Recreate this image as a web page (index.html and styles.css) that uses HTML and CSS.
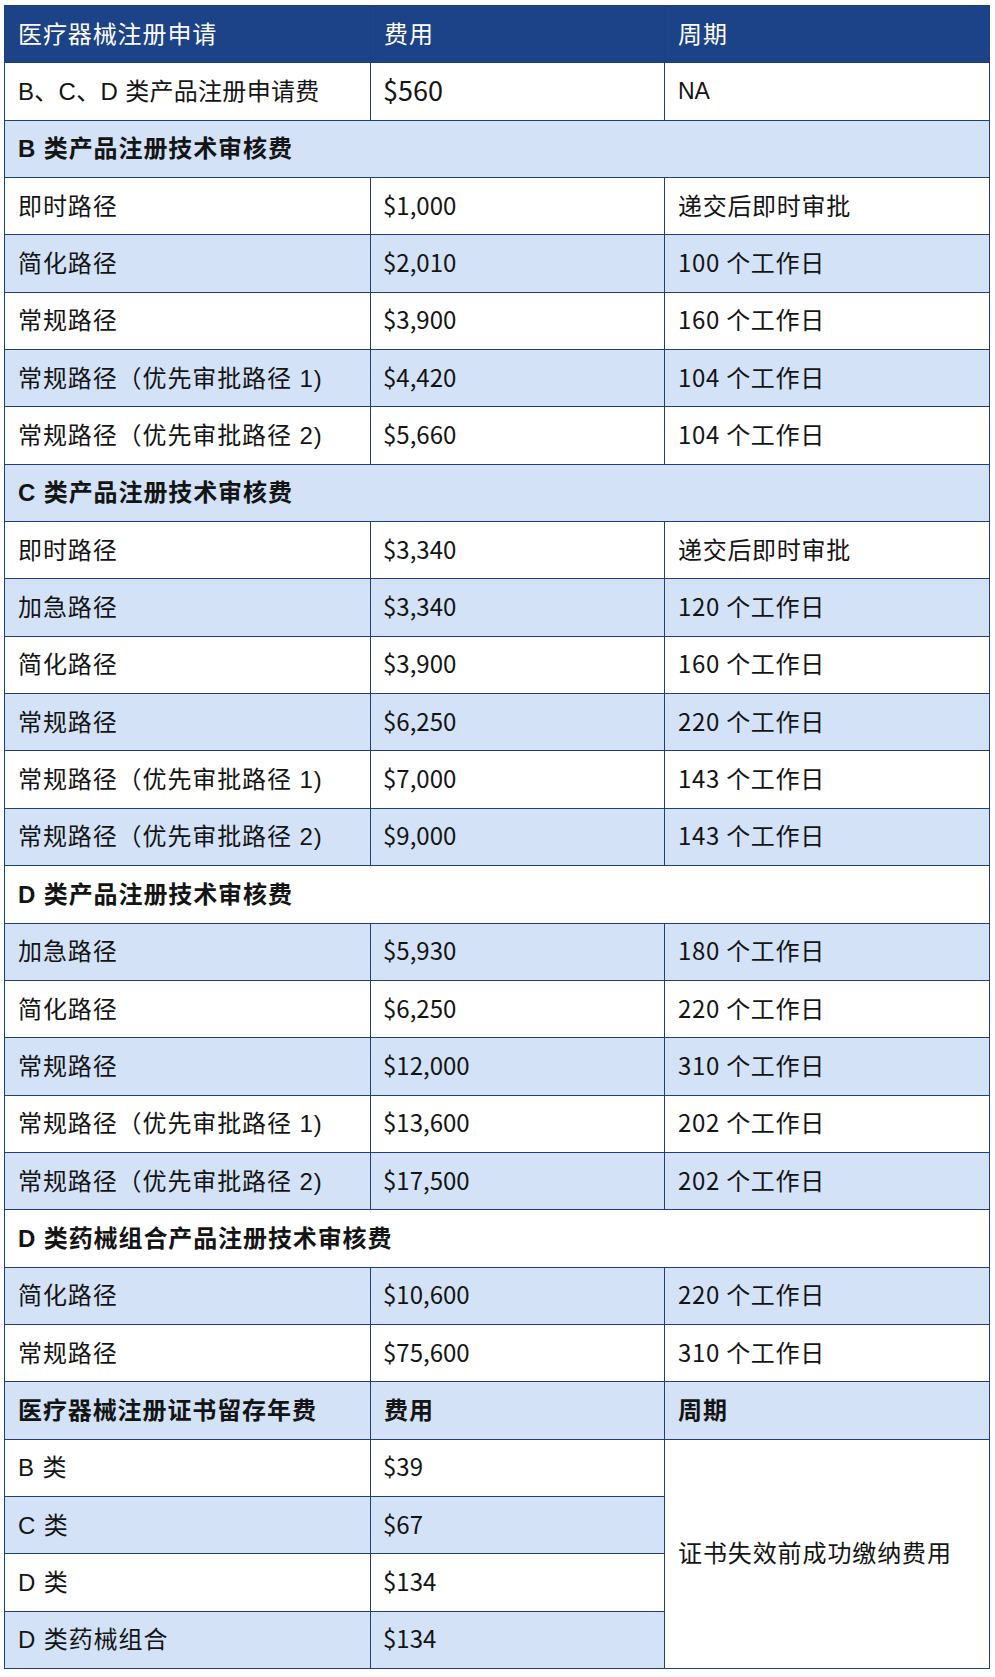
FILE: index.html
```html
<!DOCTYPE html>
<html lang="zh-CN">
<head>
<meta charset="utf-8">
<title>医疗器械注册费用</title>
<link rel="stylesheet" href="styles.css">
</head>
<body>
<div class="fee-table">
  <div class="cell head">医疗器械注册申请</div>
  <div class="cell head">费用</div>
  <div class="cell head">周期</div>

  <div class="cell c1 tight">B、C、D 类产品注册申请费</div>
  <div class="cell money big">$560</div>
  <div class="cell na">NA</div>

  <div class="cell section alt">B 类产品注册技术审核费</div>

  <div class="cell c1">即时路径</div><div class="cell money">$1,000</div><div class="cell c3">递交后即时审批</div>
  <div class="cell c1 alt">简化路径</div><div class="cell money alt">$2,010</div><div class="cell c3 alt">100 个工作日</div>
  <div class="cell c1">常规路径</div><div class="cell money">$3,900</div><div class="cell c3">160 个工作日</div>
  <div class="cell c1 alt">常规路径（优先审批路径 1)</div><div class="cell money alt">$4,420</div><div class="cell c3 alt">104 个工作日</div>
  <div class="cell c1">常规路径（优先审批路径 2)</div><div class="cell money">$5,660</div><div class="cell c3">104 个工作日</div>

  <div class="cell section alt">C 类产品注册技术审核费</div>

  <div class="cell c1">即时路径</div><div class="cell money">$3,340</div><div class="cell c3">递交后即时审批</div>
  <div class="cell c1 alt">加急路径</div><div class="cell money alt">$3,340</div><div class="cell c3 alt">120 个工作日</div>
  <div class="cell c1">简化路径</div><div class="cell money">$3,900</div><div class="cell c3">160 个工作日</div>
  <div class="cell c1 alt">常规路径</div><div class="cell money alt">$6,250</div><div class="cell c3 alt">220 个工作日</div>
  <div class="cell c1">常规路径（优先审批路径 1)</div><div class="cell money">$7,000</div><div class="cell c3">143 个工作日</div>
  <div class="cell c1 alt">常规路径（优先审批路径 2)</div><div class="cell money alt">$9,000</div><div class="cell c3 alt">143 个工作日</div>

  <div class="cell section">D 类产品注册技术审核费</div>

  <div class="cell c1 alt">加急路径</div><div class="cell money alt">$5,930</div><div class="cell c3 alt">180 个工作日</div>
  <div class="cell c1">简化路径</div><div class="cell money">$6,250</div><div class="cell c3">220 个工作日</div>
  <div class="cell c1 alt">常规路径</div><div class="cell money alt">$12,000</div><div class="cell c3 alt">310 个工作日</div>
  <div class="cell c1">常规路径（优先审批路径 1)</div><div class="cell money">$13,600</div><div class="cell c3">202 个工作日</div>
  <div class="cell c1 alt">常规路径（优先审批路径 2)</div><div class="cell money alt">$17,500</div><div class="cell c3 alt">202 个工作日</div>

  <div class="cell section">D 类药械组合产品注册技术审核费</div>

  <div class="cell c1 alt">简化路径</div><div class="cell money alt">$10,600</div><div class="cell c3 alt">220 个工作日</div>
  <div class="cell c1">常规路径</div><div class="cell money">$75,600</div><div class="cell c3">310 个工作日</div>

  <div class="cell subhead alt">医疗器械注册证书留存年费</div>
  <div class="cell subhead alt">费用</div>
  <div class="cell subhead alt">周期</div>

  <div class="cell c1">B 类</div><div class="cell money">$39</div>
  <div class="cell c3 span4">证书失效前成功缴纳费用</div>
  <div class="cell c1 alt">C 类</div><div class="cell money alt">$67</div>
  <div class="cell c1">D 类</div><div class="cell money">$134</div>
  <div class="cell c1 alt">D 类药械组合</div><div class="cell money alt">$134</div>
</div>
</body>
</html>
```

FILE: styles.css
```css
html, body {
  margin: 0;
  padding: 0;
  background: #ffffff;
}

body {
  padding: 5px 0 0 4px;
}

.fee-table {
  display: grid;
  grid-template-columns: 365px 293px 324px;
  grid-auto-rows: 56.35px;
  gap: 1px;
  padding: 1px;
  width: max-content;
  background: #1e3f7c;
}

.cell {
  display: flex;
  align-items: center;
  padding: 0 0 4px 13px;
  background: #ffffff;
  color: #141414;
  font-family: "Noto Sans CJK SC", sans-serif;
  font-size: 24px;
  letter-spacing: 0.9px;
  white-space: nowrap;
}

.cell.alt {
  background: #d3e2f6;
}

.head {
  background: #1c4288;
  color: #ffffff;
}

.c1,
.section,
.subhead {
  font-family: "Liberation Sans", "Noto Sans CJK SC", sans-serif;
}

.c1.tight {
  letter-spacing: 0.3px;
}

.money {
  padding-left: 12px;
  letter-spacing: 0;
}

.money.big {
  font-size: 27px;
}

.na {
  font-family: "Liberation Sans", sans-serif;
  font-size: 23px;
  letter-spacing: 0;
  padding-bottom: 1px;
}

.c3 {
  letter-spacing: 0.7px;
}

.section {
  grid-column: 1 / -1;
  font-weight: 700;
}

.subhead {
  font-weight: 700;
}

.span4 {
  grid-row: span 4;
  letter-spacing: 0.9px;
}
```
